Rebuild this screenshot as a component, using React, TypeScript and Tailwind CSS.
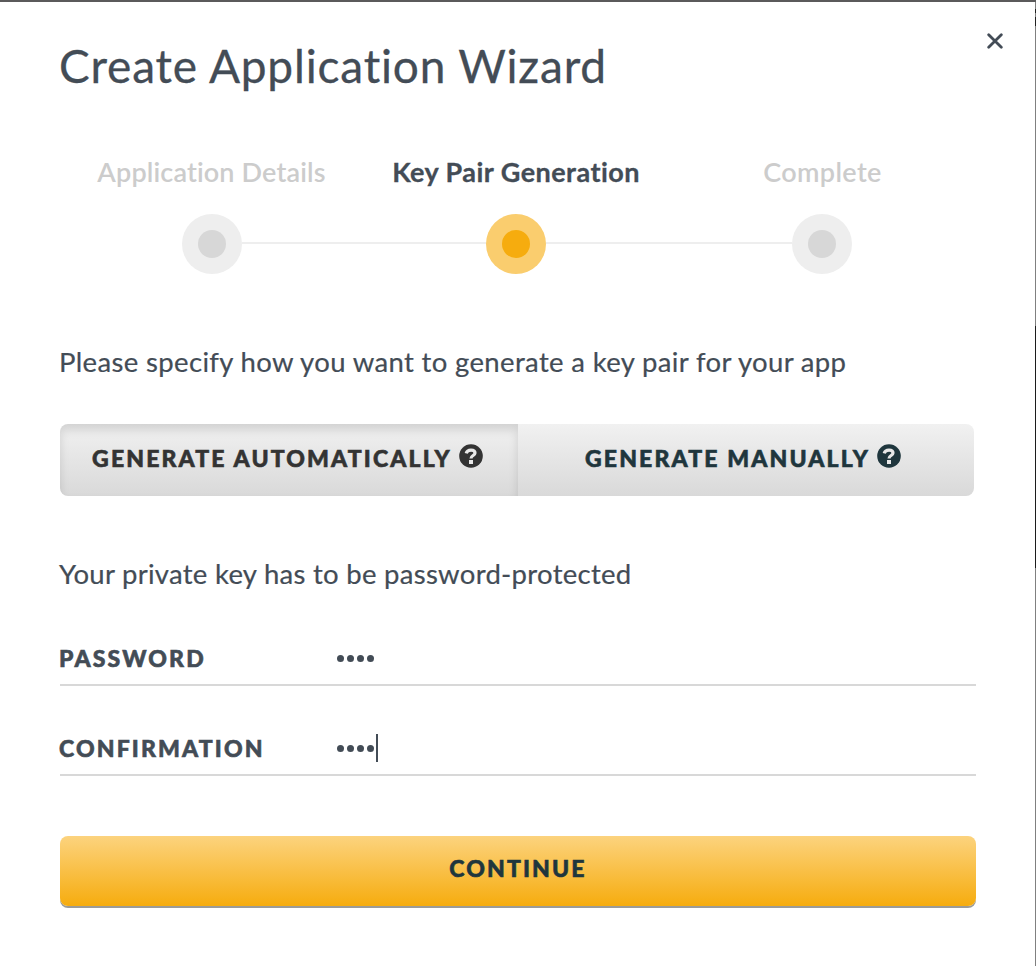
import { useState } from "react";

const face = "font-['Lato','Liberation_Sans',sans-serif]";
const caps = "text-[23px] font-black tracking-[2.15px] [-webkit-text-stroke:0.6px_currentColor]";

function HelpIcon() {
  return (
    <svg viewBox="0 0 24 24" className="mb-1 h-6 w-6 shrink-0" fill="none">
      <circle cx="12" cy="12" r="11.8" fill="currentColor" />
      <path d="M7.2 9.4C7.8 7 9.6 6.1 12 6.1c2.6 0 4 1.2 4 2.9 0 2.7-4 2.3-4 5.5" stroke="#e8e8e8" strokeWidth="3.2" />
      <rect x="10" y="16" width="4" height="4" fill="#e8e8e8" />
    </svg>
  );
}

function Dot({ active }: { active?: boolean }) {
  return (
    <div className={"flex size-[60px] shrink-0 items-center justify-center rounded-full " + (active ? "bg-[#facd6e]" : "bg-[#eeeeee]")}>
      <div className={"size-7 rounded-full " + (active ? "bg-[#f6ac0e]" : "bg-[#d7d7d7]")} />
    </div>
  );
}

function Field({ label, focused }: { label: string; focused?: boolean }) {
  return (
    <label className="flex h-[58px] items-center border-b-2 border-[#d8d8d8] pt-[3px]">
      <span className={"-ml-px w-[278px] leading-[30px] " + caps}>{label}</span>
      <span className="flex gap-[3.5px] pt-0.5">
        {[0, 1, 2, 3].map((i) => (
          <span key={i} className="size-[6.5px] rounded-full bg-[#434c56]" />
        ))}
      </span>
      {focused && <span className="ml-[2px] h-7 w-0.5 bg-[#434c56]" />}
    </label>
  );
}

export default function App() {
  const [mode, setMode] = useState("auto");
  return (
    <div className={"flex h-[966px] w-[1036px] flex-col bg-[#5b5a5b] pt-0.5 text-[#434c56] " + face}>
      <div className="flex flex-1">
        <main className="flex w-[1035px] flex-col bg-white pr-[59px] pl-[60px]">
          <header className="flex h-[144px] items-start justify-between pt-[34px]">
            <h1 className="-ml-px text-[46px] leading-[60px] tracking-[0.82px] whitespace-nowrap [-webkit-text-stroke:0.3px_currentColor]">
              Create Application Wizard
            </h1>
            <button aria-label="Close" className="-mt-[3px] -mr-[27px]">
              <svg viewBox="0 0 16 16" className="size-4" stroke="currentColor" strokeWidth="2.8" strokeLinecap="round">
                <path d="M1.7 1.7 14.3 14.3M14.3 1.7 1.7 14.3" />
              </svg>
            </button>
          </header>

          <div className="flex h-[68px] items-start justify-between pt-[9px] text-[27px] leading-[34px] font-semibold whitespace-nowrap">
            <span className="w-[303px] text-center tracking-[0.15px] text-[#cccccc]">Application Details</span>
            <span className="w-[306px] text-center font-bold tracking-[0.45px] [-webkit-text-stroke:0.3px_currentColor]">Key Pair Generation</span>
            <span className="w-[307px] text-center tracking-[0.35px] text-[#cccccc]">Complete</span>
          </div>
          <div className="flex h-[60px] items-center pr-[124px] pl-[122px]">
            <Dot />
            <div className="mb-[2px] h-0.5 w-[244px] bg-[#eeeeee]" />
            <Dot active />
            <div className="mb-[2px] h-0.5 w-[246px] bg-[#eeeeee]" />
            <Dot />
          </div>

          <p className="mt-[70px] -ml-px h-[80px] text-[27.5px] leading-[36px] tracking-[0.35px] whitespace-nowrap [-webkit-text-stroke:0.2px_currentColor]">
            Please specify how you want to generate a key pair for your app
          </p>
          <div className="flex h-[72px] w-[914px] overflow-hidden rounded-lg whitespace-nowrap">
            <button
              onClick={() => setMode("auto")}
              className={"flex w-[458px] items-center justify-center gap-[7px] bg-linear-to-b/srgb from-[#f1f1f1] to-[#d9d9d9] pr-[3px] pb-1 text-[#333333] shadow-[inset_0_6px_10px_rgba(0,0,0,0.13)] " + caps}
            >
              <span>GENERATE AUTOMATICALLY</span>
              <HelpIcon />
            </button>
            <button
              onClick={() => setMode("manual")}
              className={"flex w-[456px] items-center justify-center gap-[7px] bg-linear-to-b/srgb from-[#f1f1f1] to-[#d9d9d9] pr-[6px] pb-1 text-[#1f363d] " + caps}
            >
              <span>GENERATE MANUALLY</span>
              <HelpIcon />
            </button>
          </div>

          <p className="mt-[60px] -ml-px h-[72px] text-[27.5px] leading-[36px] tracking-[0.28px] whitespace-nowrap [-webkit-text-stroke:0.2px_currentColor]">
            Your private key has to be password-protected
          </p>
          <Field label="PASSWORD" />
          <div className="h-8" />
          <Field label="CONFIRMATION" focused={mode === "auto"} />
          <button className={"mt-[60px] flex h-[70px] items-center justify-center rounded-lg bg-linear-to-b/srgb from-[#fcd37e] to-[#f6ac0e] pb-1.5 text-[#1f363d] shadow-[0_2px_0_#9b9b97] " + caps}>
            CONTINUE
          </button>
        </main>
        <div className="flex w-px flex-col bg-[#808080]">
          <div className="mt-[7px] h-1 bg-[#222222]" />
          <div className="mt-1 h-[9px] bg-[#222222]" />
          <div className="mt-[300px] h-[242px] bg-[#1c1c1c]" />
        </div>
      </div>
    </div>
  );
}
